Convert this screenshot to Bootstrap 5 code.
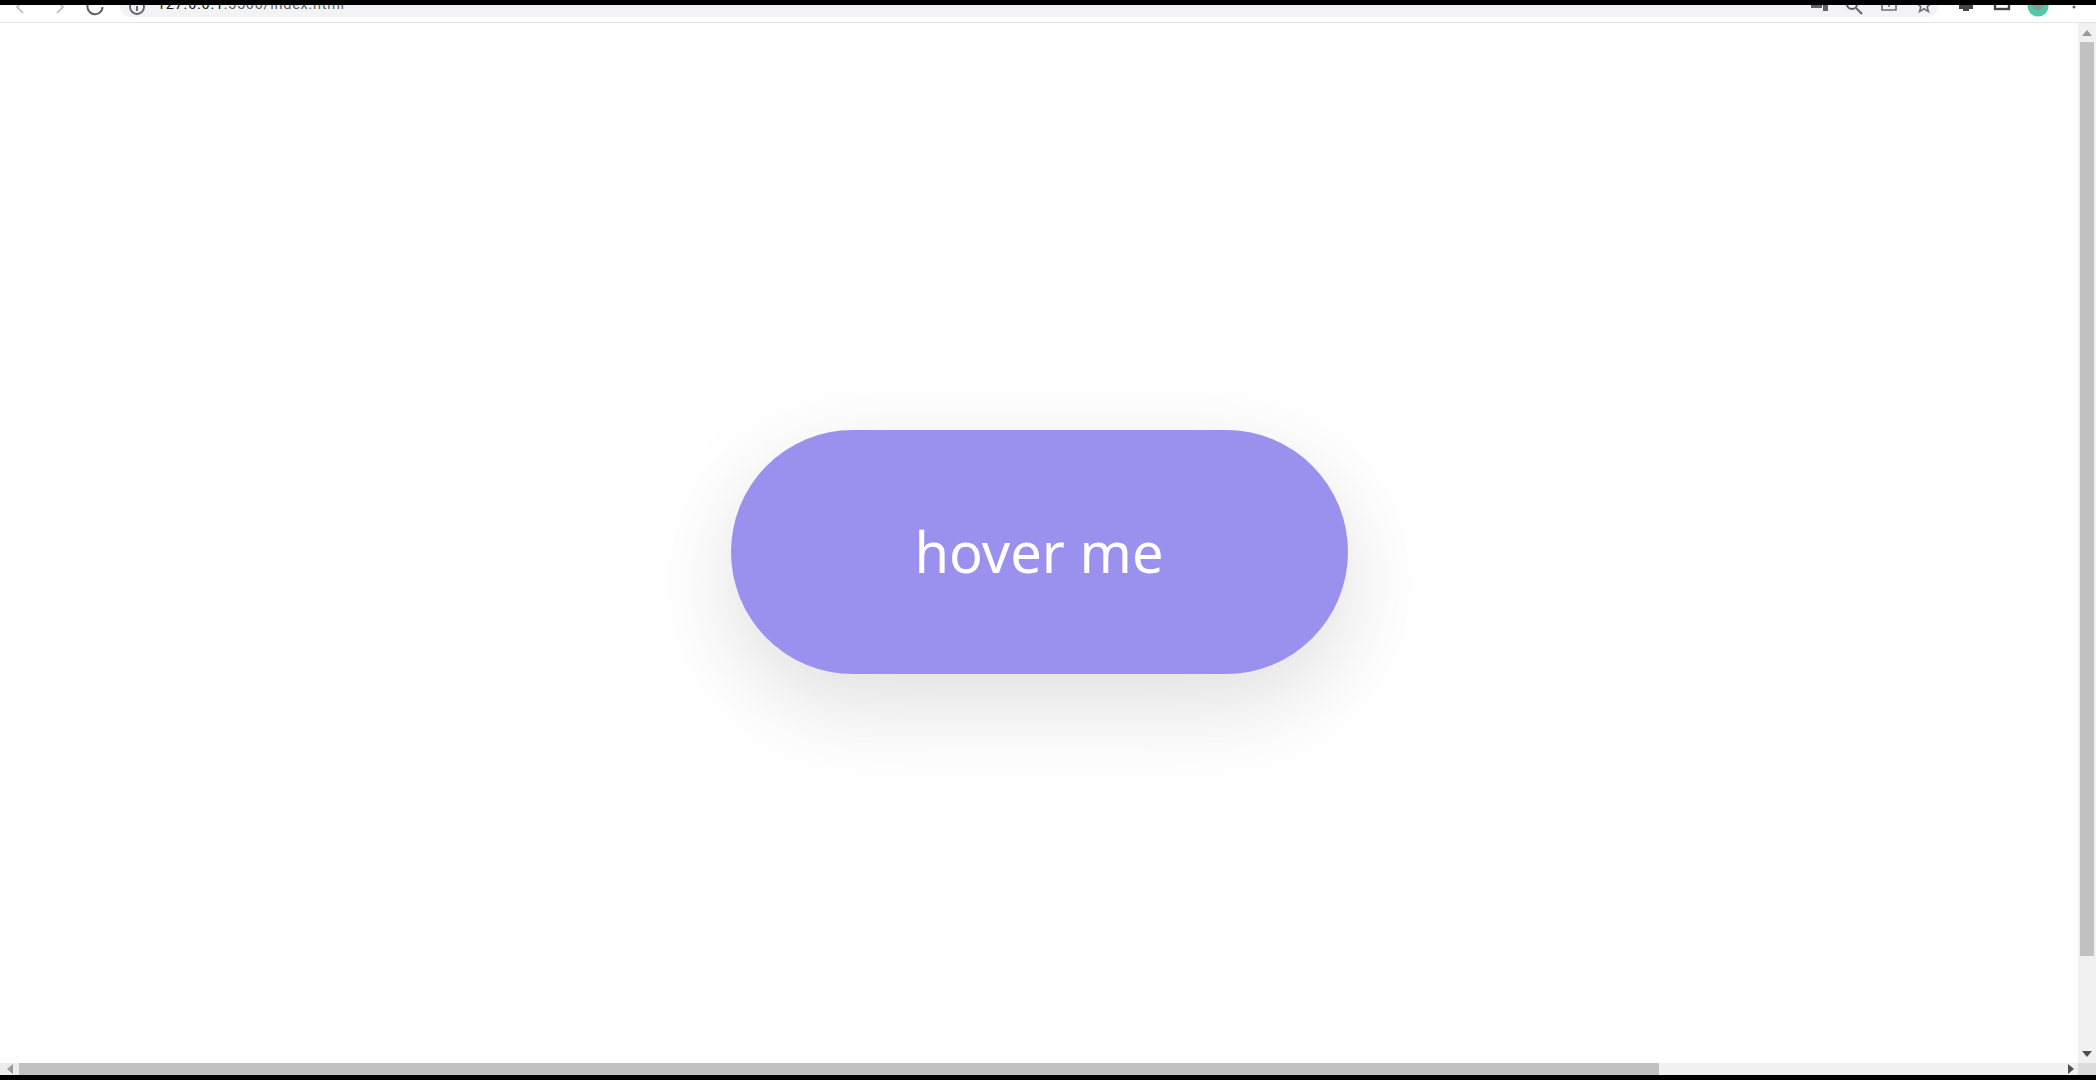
<!DOCTYPE html>
<html lang="en">
<head>
<meta charset="utf-8">
<title>hover me</title>
<link href="https://cdn.jsdelivr.net/npm/bootstrap@5.3.0/dist/css/bootstrap.min.css" rel="stylesheet">
<style>
html,body{height:100%;overflow:hidden;background:#fff;}
.blackband{background:#000;height:5px;flex:none;}
.toolbar{height:18px;flex:none;overflow:hidden;background:#fff;border-bottom:1px solid #e4e4e4;}
.tb-ico{width:24px;height:24px;margin-top:-10px;flex:none;}
.tb-ico svg{display:block;width:24px;height:24px;}
.nav-cluster{width:120px;padding-left:8px;gap:16px;flex:none;}
.nav-cluster .tb-ico:nth-child(3){margin-left:-5px;}
.omni{flex:1 1 auto;height:12px;background:#f1f3f4;border-radius:0 0 10px 10px;padding-left:5px;padding-right:2px;}
.url{font:14.5px/16px "Roboto","Liberation Sans",sans-serif;color:#202124;margin-top:-8px;margin-left:8px;white-space:nowrap;letter-spacing:.72px;}
.url span{color:#5f6368;}
.omni-right{gap:11px;}
.ext-cluster{width:158px;flex:none;gap:12px;padding-left:16px;}
.stage{flex:1 1 auto;min-width:0;padding-top:18px;background:#fff;}
.hover-pill{width:617px;height:244px;border:0;border-radius:122px;background:#9a90ee;color:#fff;font:400 56px/1 "Noto Sans","Open Sans",sans-serif;box-shadow:0 30px 90px rgba(0,0,0,.13);letter-spacing:0;padding:0 0 3px;}
.hover-pill:hover,.hover-pill:active,.hover-pill:focus{background:#9a90ee;color:#fff;}
.vbar{width:18px;flex:none;background:#f1f1f1;}
.vbar-cap{height:19px;flex:none;}
.vbar-thumb{width:14px;height:914px;background:#c1c1c1;flex:none;}
.hbar{height:12px;flex:none;background:#f1f1f1;}
.hbar-cap{width:19px;flex:none;background:#ececec;}
.hbar-thumb{width:1640px;background:#c1c1c1;flex:none;}
.hbar-corner{width:18px;background:#dcdcdc;flex:none;}
.tri{fill:#505050;}
.tri-soft{fill:#9a9a9a;}
</style>
</head>
<body class="d-flex flex-column m-0">
<div class="blackband"></div>
<header class="toolbar d-flex">
  <div class="nav-cluster d-flex">
    <div class="tb-ico"><svg viewBox="0 0 24 24" fill="none" stroke="#c4c7c9" stroke-width="2"><path d="M15 6l-6 6 6 6"/></svg></div>
    <div class="tb-ico"><svg viewBox="0 0 24 24" fill="none" stroke="#c4c7c9" stroke-width="2"><path d="M9 6l6 6-6 6"/></svg></div>
    <div class="tb-ico"><svg viewBox="0 0 24 24" fill="none" stroke="#5f6368" stroke-width="2"><path d="M18.500 8a7.500 7.500 0 1 0 1 4M19 3.500V8.500h-5"/></svg></div>
  </div>
  <div class="omni d-flex align-items-start">
    <div class="tb-ico"><svg viewBox="0 0 24 24" fill="none" stroke="#5f6368" stroke-width="1.800"><circle cx="12" cy="12" r="7"/><path d="M12 11v5M12 8v1.500"/></svg></div>
    <div class="url">127.0.0.1<span>:5500/index.html</span></div>
    <div class="omni-right d-flex ms-auto">
      <div class="tb-ico"><svg viewBox="0 0 24 24" fill="#5f6368"><path d="M4 4h11v9H4zM16 7h5v9h-5z"/></svg></div>
      <div class="tb-ico"><svg viewBox="0 0 24 24" fill="none" stroke="#5f6368" stroke-width="2"><circle cx="10" cy="9" r="5"/><path d="M14 13l6 6"/></svg></div>
      <div class="tb-ico"><svg viewBox="0 0 24 24" fill="none" stroke="#6f7377" stroke-width="1.600"><path d="M5 8v7h14V8M12 12V4"/></svg></div>
      <div class="tb-ico"><svg viewBox="0 0 24 24" fill="none" stroke="#6f7377" stroke-width="1.600"><path d="M12 3l2 5 5 .4-3.800 3.300 1.200 4.800L12 13.800l-4.400 2.700 1.200-4.800L5 8.400 10 8z"/></svg></div>
    </div>
  </div>
  <div class="ext-cluster d-flex">
    <div class="tb-ico"><svg viewBox="0 0 24 24" fill="#454545"><path d="M5 4h14v10h-4v2H9v-2H5z"/></svg></div>
    <div class="tb-ico"><svg viewBox="0 0 24 24" fill="none" stroke="#454545" stroke-width="2.400"><rect x="5" y="4" width="14" height="10"/></svg></div>
    <div class="tb-ico"><svg viewBox="0 0 24 24"><circle cx="12" cy="11" r="10.500" fill="#4fc9a8"/><circle cx="12" cy="9" r="6" fill="#8a9a98"/></svg></div>
    <div class="tb-ico"><svg viewBox="0 0 24 24" fill="#5f6368"><circle cx="12" cy="5" r="1.500"/><circle cx="12" cy="12" r="1.500"/></svg></div>
  </div>
</header>
<div class="d-flex flex-grow-1" style="min-height:0">
  <main class="stage d-flex align-items-center justify-content-center">
    <button type="button" class="btn hover-pill">hover me</button>
  </main>
  <aside class="vbar d-flex flex-column align-items-center">
    <div class="vbar-cap d-flex align-items-center justify-content-center"><svg width="10" height="6" viewBox="0 0 10 6"><path class="tri-soft" d="M5 0l5 6H0z"/></svg></div>
    <div class="vbar-thumb"></div>
    <div class="mt-auto vbar-cap d-flex align-items-center justify-content-center"><svg width="10" height="6" viewBox="0 0 10 6"><path class="tri" d="M5 6L0 0h10z"/></svg></div>
  </aside>
</div>
<div class="hbar d-flex">
  <div class="hbar-cap d-flex align-items-center justify-content-center"><svg width="6" height="10" viewBox="0 0 6 10"><path class="tri-soft" d="M0 5l6-5v10z"/></svg></div>
  <div class="hbar-thumb"></div>
  <div class="flex-grow-1 d-flex align-items-center justify-content-end pe-1"><svg width="6" height="10" viewBox="0 0 6 10"><path class="tri" d="M6 5L0 0v10z"/></svg></div>
  <div class="hbar-corner"></div>
</div>
<div class="blackband"></div>
<script src="https://cdn.jsdelivr.net/npm/bootstrap@5.3.0/dist/js/bootstrap.bundle.min.js"></script>
</body>
</html>
